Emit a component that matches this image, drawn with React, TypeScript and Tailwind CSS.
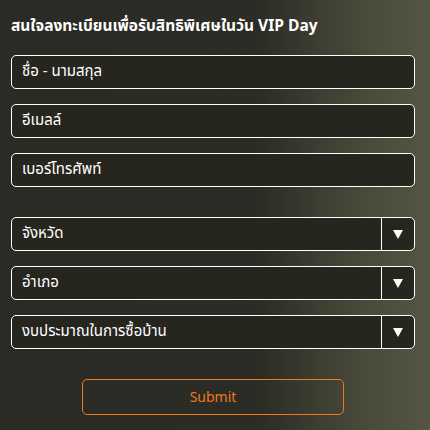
import React from "react";

const font = { fontFamily: '"Noto Sans Thai", "Noto Sans", "Liberation Sans", sans-serif' };

function Field({ label }: { label: string }) {
  return (
    <div className="h-[34px] rounded-[5px] border border-white bg-[#26261f] flex items-center px-[10px]">
      <span className="text-white text-[15px]">{label}</span>
    </div>
  );
}

function Select({ label }: { label: string }) {
  return (
    <div className="h-[34px] rounded-[5px] border border-white bg-[#26261f] flex">
      <div className="flex-1 flex items-center px-[10px]">
        <span className="text-white text-[15px]">{label}</span>
      </div>
      <div className="w-[33px] border-l border-white flex items-center justify-center">
        <svg width="10" height="9" viewBox="0 0 10 9">
          <path d="M0 0 L10 0 L5 9 Z" fill="white" />
        </svg>
      </div>
    </div>
  );
}

export default function App() {
  return (
    <div
      className="w-[430px] h-[430px] bg-[linear-gradient(90deg,#2b2b25_0%,#2c2c26_60%,#4a4a3a_85%,#555544_100%)] pl-[11px] pr-[15px] pt-[14px]"
      style={font}
    >
      <h1 className="text-white text-[15.5px] font-bold leading-[26px] mb-[15px]">
        สนใจลงทะเบียนเพื่อรับสิทธิพิเศษในวัน VIP Day
      </h1>
      <div className="flex flex-col gap-[15px]">
        <Field label="ชื่อ - นามสกุล" />
        <Field label="อีเมลล์" />
        <Field label="เบอร์โทรศัพท์" />
      </div>
      <div className="flex flex-col gap-[15px] mt-[30px]">
        <Select label="จังหวัด" />
        <Select label="อำเภอ" />
        <Select label="งบประมาณในการซื้อบ้าน" />
      </div>
      <div className="flex justify-center mt-[30px]">
        <button className="w-[262px] h-[36px] rounded-[5px] border border-[#f07a1a] text-[#f07a1a] text-[14px] bg-transparent">
          Submit
        </button>
      </div>
    </div>
  );
}
